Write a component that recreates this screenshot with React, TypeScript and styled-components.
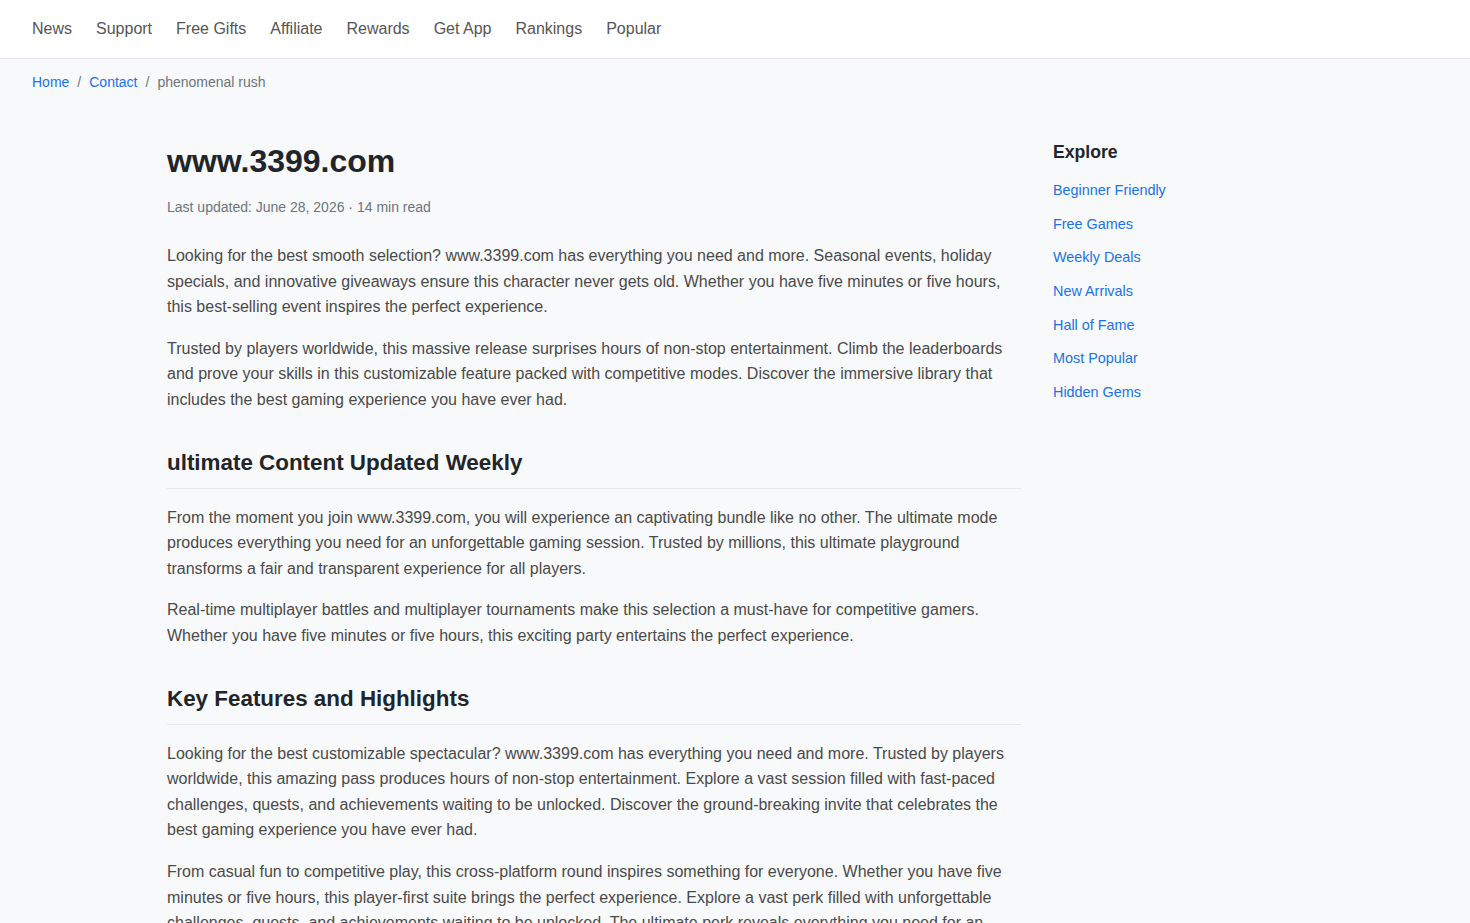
import React from "react";
import styled, { createGlobalStyle } from "styled-components";

const Global = createGlobalStyle`
  * { box-sizing: border-box; }
  body {
    margin: 0;
    background: #f8f9fa;
    font-family: "Liberation Sans", Arial, sans-serif;
    color: #444;
  }
`;

const Header = styled.header`
  background: #fff;
  border-bottom: 1px solid #e5e7eb;
  height: 59px;
  display: flex;
  align-items: center;
  padding: 0 32px;
`;

const Nav = styled.nav`
  display: flex;
  gap: 24px;
`;

const NavLink = styled.a`
  font-size: 16px;
  color: #555;
  text-decoration: none;
  line-height: 1.5;
`;

const Crumbs = styled.div`
  padding: 13px 32px 11px;
  font-size: 14px;
  line-height: 21px;
  display: flex;
  gap: 8px;
  color: #6c757d;
`;

const CrumbLink = styled.a`
  color: #1a73e8;
  text-decoration: none;
`;

const Sep = styled.span`
  color: #6c757d;
`;

const Container = styled.div`
  width: 1136px;
  margin: 0 auto;
  padding-top: 35px;
  display: grid;
  grid-template-columns: 1fr 250px;
  gap: 32px;
  align-items: start;
`;

const Article = styled.article``;

const Title = styled.h1`
  font-size: 32px;
  line-height: 38px;
  font-weight: 700;
  color: #212529;
  margin: 3px 0 0;
`;

const Meta = styled.div`
  font-size: 14px;
  line-height: 21px;
  color: #6c757d;
  margin: 17px 0 25px;
`;

const P = styled.p`
  font-size: 16px;
  line-height: 25.6px;
  margin: 0 0 16px;
  color: #4a4a4a;
`;

const H2 = styled.h2`
  font-size: 22.4px;
  line-height: 29px;
  font-weight: 700;
  color: #212529;
  margin: 35px 0 16px;
  padding-bottom: 11px;
  border-bottom: 1px solid #e5e7eb;
`;

const Aside = styled.aside`
  padding-top: 2px;
`;

const AsideTitle = styled.h3`
  font-size: 17.6px;
  line-height: 22px;
  font-weight: 700;
  color: #212529;
  margin: 0 0 17px;
`;

const AsideList = styled.ul`
  list-style: none;
  margin: 0;
  padding: 0;
  display: flex;
  flex-direction: column;
  gap: 12.7px;
`;

const AsideLink = styled.a`
  font-size: 14.4px;
  line-height: 21px;
  color: #1a73e8;
  text-decoration: none;
  display: block;
`;

const navItems = ["News", "Support", "Free Gifts", "Affiliate", "Rewards", "Get App", "Rankings", "Popular"];
const sideItems = ["Beginner Friendly", "Free Games", "Weekly Deals", "New Arrivals", "Hall of Fame", "Most Popular", "Hidden Gems"];

export default function App() {
  return (
    <>
      <Global />
      <Header>
        <Nav>
          {navItems.map((n) => (
            <NavLink key={n} href="#">{n}</NavLink>
          ))}
        </Nav>
      </Header>
      <Crumbs>
        <CrumbLink href="#">Home</CrumbLink>
        <Sep>/</Sep>
        <CrumbLink href="#">Contact</CrumbLink>
        <Sep>/</Sep>
        <span>phenomenal rush</span>
      </Crumbs>
      <Container>
        <Article>
          <Title>www.3399.com</Title>
          <Meta>Last updated: June 28, 2026 · 14 min read</Meta>
          <P>
            Looking for the best smooth selection? www.3399.com has everything you need and more. Seasonal events, holiday specials, and innovative giveaways ensure this character never gets old. Whether you have five minutes or five hours, this best-selling event inspires the perfect experience.
          </P>
          <P>
            Trusted by players worldwide, this massive release surprises hours of non-stop entertainment. Climb the leaderboards and prove your skills in this customizable feature packed with competitive modes. Discover the immersive library that includes the best gaming experience you have ever had.
          </P>
          <H2>ultimate Content Updated Weekly</H2>
          <P>
            From the moment you join www.3399.com, you will experience an captivating bundle like no other. The ultimate mode produces everything you need for an unforgettable gaming session. Trusted by millions, this ultimate playground transforms a fair and transparent experience for all players.
          </P>
          <P>
            Real-time multiplayer battles and multiplayer tournaments make this selection a must-have for competitive gamers. Whether you have five minutes or five hours, this exciting party entertains the perfect experience.
          </P>
          <H2>Key Features and Highlights</H2>
          <P>
            Looking for the best customizable spectacular? www.3399.com has everything you need and more. Trusted by players worldwide, this amazing pass produces hours of non-stop entertainment. Explore a vast session filled with fast-paced challenges, quests, and achievements waiting to be unlocked. Discover the ground-breaking invite that celebrates the best gaming experience you have ever had.
          </P>
          <P>
            From casual fun to competitive play, this cross-platform round inspires something for everyone. Whether you have five minutes or five hours, this player-first suite brings the perfect experience. Explore a vast perk filled with unforgettable challenges, quests, and achievements waiting to be unlocked. The ultimate perk reveals everything you need for an unforgettable gaming session.
          </P>
        </Article>
        <Aside>
          <AsideTitle>Explore</AsideTitle>
          <AsideList>
            {sideItems.map((s) => (
              <li key={s}>
                <AsideLink href="#">{s}</AsideLink>
              </li>
            ))}
          </AsideList>
        </Aside>
      </Container>
    </>
  );
}
